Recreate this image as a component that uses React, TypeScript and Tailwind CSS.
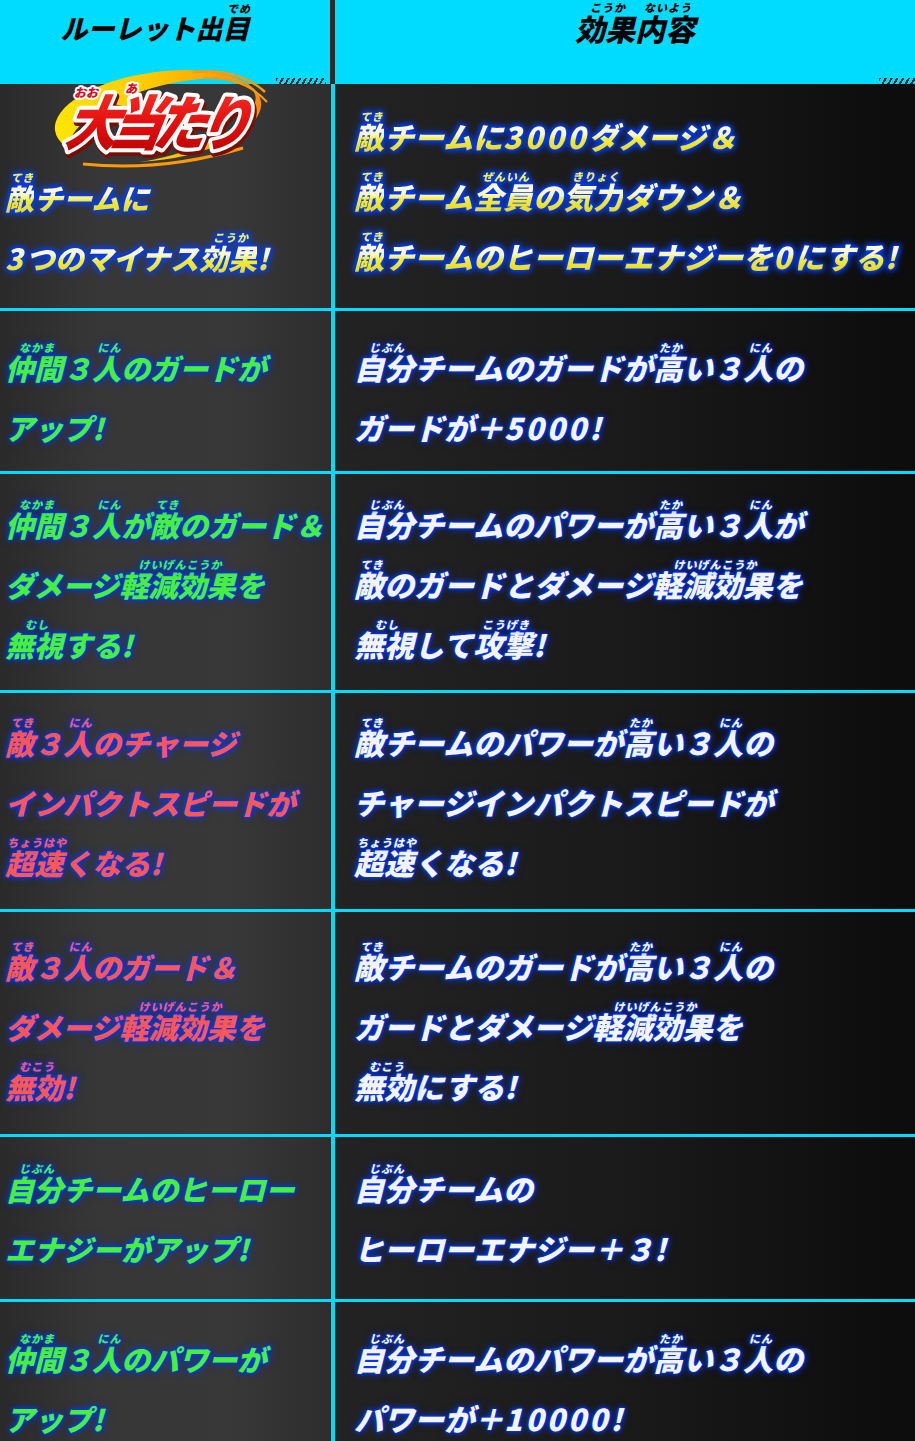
import React from "react";

type Seg = string | [string, string] | { d: string };
type Line = Seg[];

const GLOW =
  "[text-shadow:0_0_2px_#0038ff,0_0_3px_#0038ff,0_0_5px_#0038ff,0_0_9px_rgba(0,70,255,0.6)]";
const YG =
  "bg-[linear-gradient(180deg,#f6f04a_0%,#f6f04a_24%,#fffce6_29%,#fff9c8_47%,#f4ec3a_56%,#e2d420_80%)] bg-clip-text text-transparent";
const YELLOW_FILTER =
  "[filter:drop-shadow(0_0_1px_#0038ff)_drop-shadow(0_0_2px_#0038ff)_drop-shadow(0_0_3px_#0046ff)]";

function R({
  b,
  r,
  top,
  baseCls = "",
  rtCls = "",
}: {
  b: string;
  r: string;
  top: string;
  baseCls?: string;
  rtCls?: string;
}) {
  return (
    <span className={`relative inline-block ${baseCls}`}>
      {b}
      <span
        className={`absolute left-[calc(50%+3px)] -translate-x-1/2 ${top} whitespace-nowrap text-[11px] leading-none tracking-[1px] ${rtCls}`}
      >
        {r}
      </span>
    </span>
  );
}

function TextLine({ line, yellow = false }: { line: Line; yellow?: boolean }) {
  return (
    <div
      className={`h-[60px] whitespace-nowrap leading-[60px] ${yellow ? `${YG} ${YELLOW_FILTER}` : ""}`}
    >
      {line.map((s, i) => {
        if (typeof s === "string") return <React.Fragment key={i}>{s}</React.Fragment>;
        if (Array.isArray(s))
          return (
            <R
              key={i}
              b={s[0]}
              r={s[1]}
              top="top-[5px]"
              baseCls={yellow ? YG : ""}
              rtCls={yellow ? "text-[#f6f04a]" : ""}
            />
          );
        return (
          <span key={i} className="tracking-[3px]">
            {s.d}
          </span>
        );
      })}
    </div>
  );
}

function Logo() {
  const ff = "'Noto Sans CJK JP', sans-serif";
  return (
    <div className="relative z-10 -mt-[16px] h-[99px] pl-[38px] [text-shadow:none]">
      <svg width="225" height="100" viewBox="0 0 225 100" className="overflow-visible">
        <defs>
          <linearGradient id="sw" x1="0" y1="0" x2="1" y2="0">
            <stop offset="0" stopColor="#ffe600" />
            <stop offset="0.5" stopColor="#ffc800" />
            <stop offset="1" stopColor="#ff8a00" />
          </linearGradient>
          <linearGradient id="rd" x1="0" y1="0" x2="0" y2="1">
            <stop offset="0" stopColor="#ff3a2a" />
            <stop offset="0.6" stopColor="#e00d0d" />
            <stop offset="1" stopColor="#b00000" />
          </linearGradient>
          <mask id="ring" maskUnits="userSpaceOnUse" x="-20" y="-20" width="270" height="140">
            <rect x="-20" y="-20" width="270" height="140" fill="white" />
            <ellipse cx="119" cy="54" rx="96" ry="35" transform="rotate(-8 119 54)" fill="black" />
          </mask>
        </defs>
        <ellipse cx="115" cy="48" rx="104" ry="44" transform="rotate(-8 115 48)" fill="url(#sw)" mask="url(#ring)" />
        <path d="M40 30 Q60 18 100 14 L90 40 Z" fill="#ffd400" />
        <path d="M150 4 Q196 0 222 24" stroke="#ff9a00" strokeWidth="2.5" fill="none" />
        <path d="M160 10 Q200 8 224 34" stroke="#ff9a00" strokeWidth="2" fill="none" />
        <path d="M40 96 Q120 104 200 80" stroke="#ff9a00" strokeWidth="3" fill="none" />
        <g transform="translate(20 77) skewX(-10) scale(1 1.12)">
          <text
            x="2"
            y="3"
            fontSize="53"
            fontWeight="900"
            letterSpacing="-9"
            fontFamily={ff}
            fill="#7a0c00"
            stroke="#7a0c00"
            strokeWidth="8"
            strokeLinejoin="round"
          >
            大当たり
          </text>
          <text
            x="0"
            y="0"
            fontSize="53"
            fontWeight="900"
            letterSpacing="-9"
            fontFamily={ff}
            fill="url(#rd)"
            stroke="#ffffff"
            strokeWidth="7"
            strokeLinejoin="round"
            paintOrder="stroke"
          >
            大当たり
          </text>
        </g>
        <text
          x="43"
          y="29"
          textAnchor="middle"
          fontSize="12"
          fontWeight="900"
          fontFamily={ff}
          fill="#e0001b"
          stroke="#ffffff"
          strokeWidth="4"
          strokeLinejoin="round"
          paintOrder="stroke"
        >
          おお
        </text>
        <text
          x="88"
          y="25"
          textAnchor="middle"
          fontSize="12"
          fontWeight="900"
          fontFamily={ff}
          fill="#e0001b"
          stroke="#ffffff"
          strokeWidth="4"
          strokeLinejoin="round"
          paintOrder="stroke"
        >
          あ
        </text>
      </svg>
    </div>
  );
}

const LEFT_BG =
  "bg-[linear-gradient(90deg,#2a2a2a_0%,#373737_30%,#383838_70%,#2d2d2d_100%)]";
const RIGHT_BG = "bg-[linear-gradient(90deg,#232323_0%,#1a1a1a_50%,#0c0c0c_100%)]";

const Sep = () => <div className="h-[3px] bg-[#00dcff]" />;

const green = "text-[#47f03a]";
const red = "text-[#ff5656]";
const white = "text-[#f5f5f5]";

export default function App() {
  return (
    <div className="h-[1441px] w-[915px] overflow-hidden bg-[#111] font-['Noto_Sans_CJK_JP','Noto_Sans',sans-serif] text-[29px] font-black italic">
      {/* Header */}
      <div className="flex h-[84px]">
        <div className="relative flex w-[330px] justify-center bg-[#00dcff] pr-[20px]">
          <div className="h-[56px] whitespace-nowrap text-[27px] leading-[56px] text-black">
            ルーレット出
            <R b="目" r="でめ" top="top-[3px]" />
          </div>
          <div className="absolute bottom-0 right-[4px] h-[6px] w-[50px] bg-[repeating-linear-gradient(120deg,#2b2b2b_0_2px,transparent_2px_5px)]" />
        </div>
        <div className="w-[5px] bg-[#2b2b2b]" />
        <div className="relative flex flex-1 justify-center bg-[#00dcff] pl-[20px]">
          <div className="h-[56px] whitespace-nowrap text-[30px] leading-[56px] text-black">
            <R b="効果" r="こうか" top="top-[2px]" />
            <R b="内容" r="ないよう" top="top-[2px]" />
          </div>
          <div className="absolute bottom-0 right-0 h-[6px] w-[36px] bg-[repeating-linear-gradient(120deg,#2b2b2b_0_2px,transparent_2px_5px)]" />
        </div>
      </div>

      {/* Row 1 */}
      <div className="flex h-[224px]">
        <div className={`w-[331px] shrink-0 pl-[5px] ${LEFT_BG}`}>
          <Logo />
          <TextLine yellow line={[["敵", "てき"], "チームに"]} />
          <TextLine yellow line={[{ d: "3" }, "つのマイナス", ["効果", "こうか"], "!"]} />
        </div>
        <div className={`flex-1 border-l-4 border-[#00dcff] pl-[19px] pt-[22px] text-[30px] ${RIGHT_BG}`}>
          <TextLine yellow line={[["敵", "てき"], "チームに", { d: "3000" }, "ダメージ＆"]} />
          <TextLine
            yellow
            line={[["敵", "てき"], "チーム", ["全員", "ぜんいん"], "の", ["気力", "きりょく"], "ダウン＆"]}
          />
          <TextLine yellow line={[["敵", "てき"], "チームのヒーローエナジーを", { d: "0" }, "にする!"]} />
        </div>
      </div>
      <Sep />

      {/* Row 2 */}
      <div className="flex h-[160px]">
        <div className={`w-[331px] shrink-0 pl-[5px] pt-[26px] ${LEFT_BG} ${green} ${GLOW}`}>
          <TextLine line={[["仲間", "なかま"], "３", ["人", "にん"], "のガードが"]} />
          <TextLine line={["アップ!"]} />
        </div>
        <div className={`flex-1 border-l-4 border-[#00dcff] pl-[19px] pt-[26px] text-[30px] ${RIGHT_BG} ${white} ${GLOW}`}>
          <TextLine line={[["自分", "じぶん"], "チームのガードが", ["高", "たか"], "い３", ["人", "にん"], "の"]} />
          <TextLine line={["ガードが＋", { d: "5000" }, "!"]} />
        </div>
      </div>
      <Sep />

      {/* Row 3 */}
      <div className="flex h-[216px]">
        <div className={`w-[331px] shrink-0 pl-[5px] pt-[20px] ${LEFT_BG} ${green} ${GLOW}`}>
          <TextLine line={[["仲間", "なかま"], "３", ["人", "にん"], "が", ["敵", "てき"], "のガード＆"]} />
          <TextLine line={["ダメージ", ["軽減効果", "けいげんこうか"], "を"]} />
          <TextLine line={[["無視", "むし"], "する!"]} />
        </div>
        <div className={`flex-1 border-l-4 border-[#00dcff] pl-[19px] pt-[20px] text-[30px] ${RIGHT_BG} ${white} ${GLOW}`}>
          <TextLine line={[["自分", "じぶん"], "チームのパワーが", ["高", "たか"], "い３", ["人", "にん"], "が"]} />
          <TextLine line={[["敵", "てき"], "のガードとダメージ", ["軽減効果", "けいげんこうか"], "を"]} />
          <TextLine line={[["無視", "むし"], "して", ["攻撃", "こうげき"], "!"]} />
        </div>
      </div>
      <Sep />

      {/* Row 4 */}
      <div className="flex h-[216px]">
        <div className={`w-[331px] shrink-0 pl-[5px] pt-[19px] ${LEFT_BG} ${red} ${GLOW}`}>
          <TextLine line={[["敵", "てき"], "３", ["人", "にん"], "のチャージ"]} />
          <TextLine line={["インパクトスピードが"]} />
          <TextLine line={[["超速", "ちょうはや"], "くなる!"]} />
        </div>
        <div className={`flex-1 border-l-4 border-[#00dcff] pl-[19px] pt-[19px] text-[30px] ${RIGHT_BG} ${white} ${GLOW}`}>
          <TextLine line={[["敵", "てき"], "チームのパワーが", ["高", "たか"], "い３", ["人", "にん"], "の"]} />
          <TextLine line={["チャージインパクトスピードが"]} />
          <TextLine line={[["超速", "ちょうはや"], "くなる!"]} />
        </div>
      </div>
      <Sep />

      {/* Row 5 */}
      <div className="flex h-[222px]">
        <div className={`w-[331px] shrink-0 pl-[5px] pt-[24px] ${LEFT_BG} ${red} ${GLOW}`}>
          <TextLine line={[["敵", "てき"], "３", ["人", "にん"], "のガード＆"]} />
          <TextLine line={["ダメージ", ["軽減効果", "けいげんこうか"], "を"]} />
          <TextLine line={[["無効", "むこう"], "!"]} />
        </div>
        <div className={`flex-1 border-l-4 border-[#00dcff] pl-[19px] pt-[24px] text-[30px] ${RIGHT_BG} ${white} ${GLOW}`}>
          <TextLine line={[["敵", "てき"], "チームのガードが", ["高", "たか"], "い３", ["人", "にん"], "の"]} />
          <TextLine line={["ガードとダメージ", ["軽減効果", "けいげんこうか"], "を"]} />
          <TextLine line={[["無効", "むこう"], "にする!"]} />
        </div>
      </div>
      <Sep />

      {/* Row 6 */}
      <div className="flex h-[162px]">
        <div className={`w-[331px] shrink-0 pl-[5px] pt-[21px] ${LEFT_BG} ${green} ${GLOW}`}>
          <TextLine line={[["自分", "じぶん"], "チームのヒーロー"]} />
          <TextLine line={["エナジーがアップ!"]} />
        </div>
        <div className={`flex-1 border-l-4 border-[#00dcff] pl-[19px] pt-[21px] text-[30px] ${RIGHT_BG} ${white} ${GLOW}`}>
          <TextLine line={[["自分", "じぶん"], "チームの"]} />
          <TextLine line={["ヒーローエナジー＋３!"]} />
        </div>
      </div>
      <Sep />

      {/* Row 7 */}
      <div className="flex h-[139px]">
        <div className={`w-[331px] shrink-0 pl-[5px] pt-[26px] ${LEFT_BG} ${green} ${GLOW}`}>
          <TextLine line={[["仲間", "なかま"], "３", ["人", "にん"], "のパワーが"]} />
          <TextLine line={["アップ!"]} />
        </div>
        <div className={`flex-1 border-l-4 border-[#00dcff] pl-[19px] pt-[26px] text-[30px] ${RIGHT_BG} ${white} ${GLOW}`}>
          <TextLine line={[["自分", "じぶん"], "チームのパワーが", ["高", "たか"], "い３", ["人", "にん"], "の"]} />
          <TextLine line={["パワーが＋", { d: "10000" }, "!"]} />
        </div>
      </div>
    </div>
  );
}
